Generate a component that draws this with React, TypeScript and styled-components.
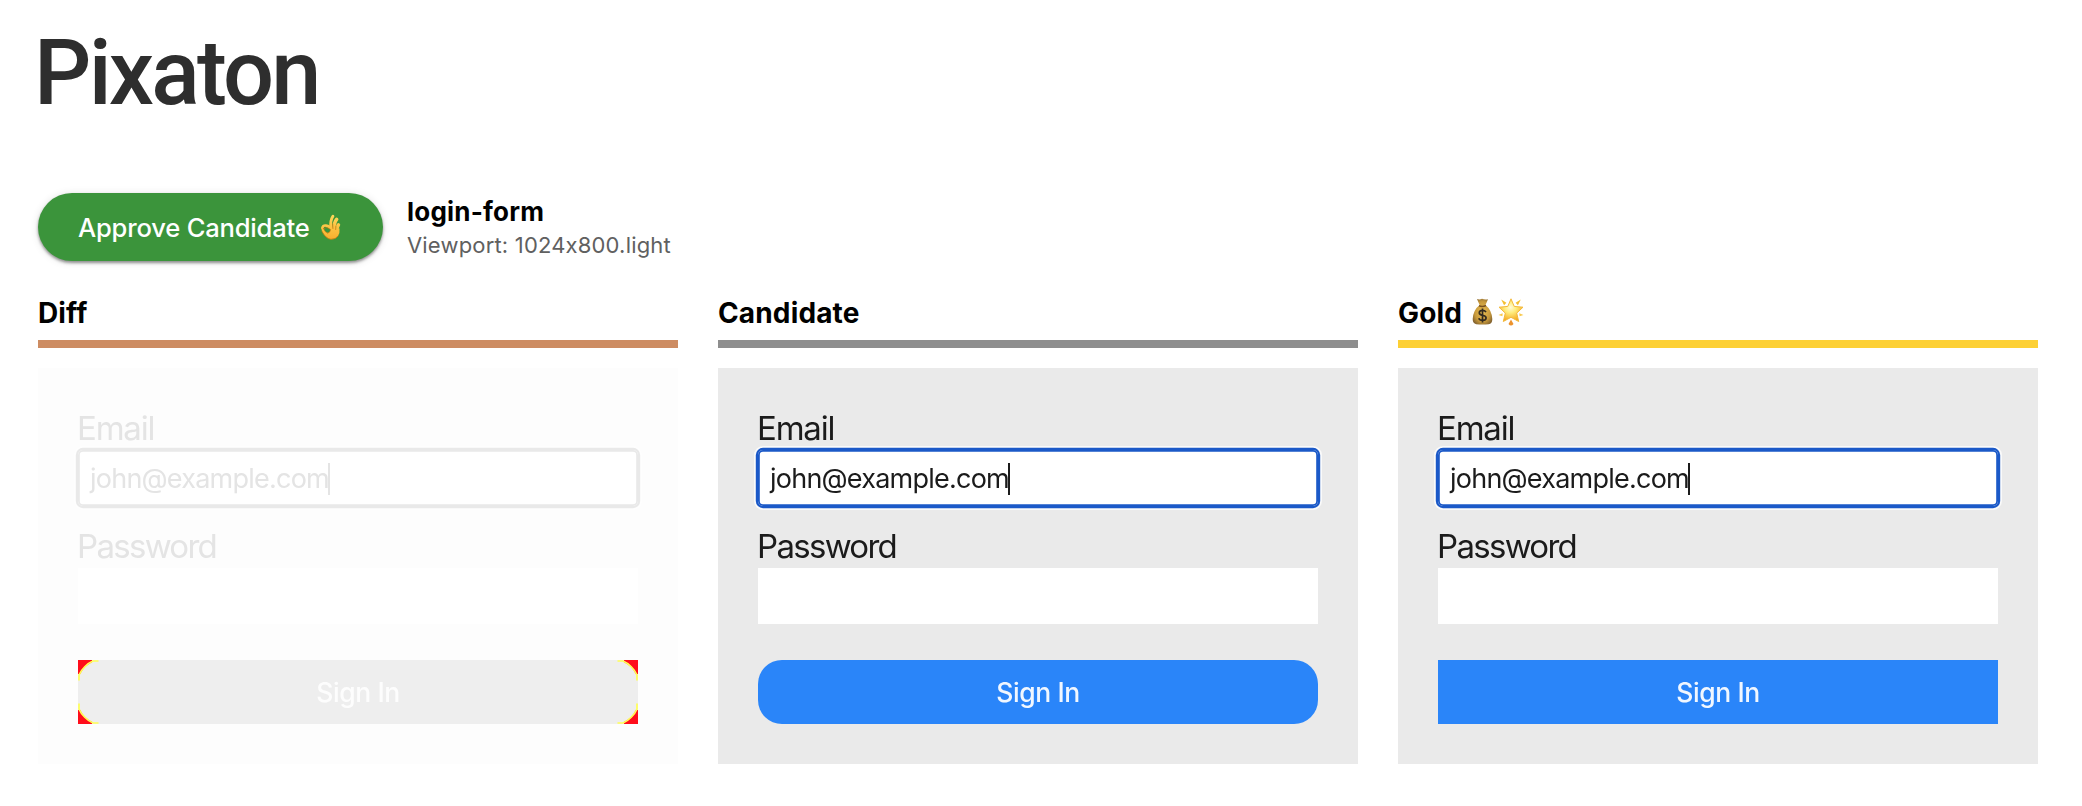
import React from "react";
import styled, { createGlobalStyle } from "styled-components";

const GlobalStyle = createGlobalStyle`
  * { box-sizing: border-box; }
  body {
    margin: 0;
    background: #fff;
    color: #000;
    font-family: Inter, "Liberation Sans", sans-serif;
    font-feature-settings: "calt" 0;
  }
`;

const Page = styled.main`
  padding: 0 44px 42px 38px;
`;

const Brand = styled.header`
  height: 193px;
  padding-top: 19px;
`;

const Wordmark = styled.h1`
  margin: 0 0 0 -4px;
  font: 500 90px/110px Roboto, sans-serif;
  letter-spacing: -2.8px;
  color: #2e2e2e;
`;

const Toolbar = styled.section`
  display: flex;
  gap: 24px;
  height: 68px;
`;

const ApproveButton = styled.button`
  display: flex;
  align-items: center;
  gap: 10px;
  width: 345px;
  height: 68px;
  padding: 1px 0 0 40px;
  border: 0;
  border-radius: 34px;
  background: #3b943b;
  box-shadow: 0 2px 3px rgba(0, 0, 0, 0.4), 0 1px 8px rgba(0, 0, 0, 0.12);
  color: #fff;
  font: 500 25.6px/68px Inter, sans-serif;
  letter-spacing: -0.2px;
  white-space: nowrap;
`;

const TestInfo = styled.div`
  padding-top: 3px;
`;

const TestName = styled.div`
  margin-bottom: 1px;
  font-size: 26px;
  font-weight: 700;
  line-height: 32px;
  letter-spacing: 0.2px;
`;

const Viewport = styled.div`
  font-size: 22px;
  line-height: 32px;
  letter-spacing: 0.18px;
  color: #606060;
`;

const Columns = styled.section`
  display: grid;
  grid-template-columns: repeat(3, 640px);
  gap: 40px;
  padding-top: 34px;
`;

const ColumnTitle = styled.h2<{ $line: string }>`
  display: flex;
  align-items: flex-start;
  height: 53px;
  margin: 0 0 20px;
  border-bottom: 8px solid ${(p) => p.$line};
  font-size: 28px;
  font-weight: 700;
  line-height: 36px;
  letter-spacing: 0.15px;
`;

const EmojiPair = styled.span`
  display: flex;
  gap: 5px;
  margin: 3px 0 0 10px;
`;

type Tone = {
  panel: string;
  text: string;
  outline: string;
  halo: string;
  button: string;
  buttonText: string;
};

const liveTone: Tone = {
  panel: "#eaeaea",
  text: "#1b1b1b",
  outline: "#1b59c8",
  halo: "#fafafa",
  button: "#2a85f9",
  buttonText: "#f1f7ff",
};

const fadedTone: Tone = {
  panel: "#fdfdfd",
  text: "#e4e4e4",
  outline: "#e9e9e9",
  halo: "#fefefe",
  button: "#eeeeee",
  buttonText: "#fdfdfd",
};

const Panel = styled.div<{ $tone: Tone }>`
  height: 396px;
  padding: 40px;
  background: ${(p) => p.$tone.panel};
  color: ${(p) => p.$tone.text};
`;

const Label = styled.div<{ $tracking: number }>`
  height: 42px;
  margin-left: -1px;
  font-size: 33px;
  line-height: 40px;
  letter-spacing: ${(p) => p.$tracking}px;
  filter: blur(0.5px);
`;

const Field = styled.div<{ $tone?: Tone }>`
  display: flex;
  align-items: center;
  height: 56px;
  padding: 2px 0 0 12px;
  background: #fff;
  font-size: 27px;
  line-height: 54px;
  letter-spacing: -0.77px;
  ${(p) =>
    p.$tone &&
    `
    border-radius: 5px;
    margin-bottom: 20px;
    box-shadow: inset 0 0 0 1.8px ${p.$tone.outline}, 0 0 0 2.2px ${p.$tone.outline}, 0 0 0 4px ${p.$tone.halo};
  `}
`;

const FieldText = styled.span`
  filter: blur(0.5px);
`;

const Caret = styled.i`
  width: 2px;
  height: 32px;
  margin-left: -1px;
  background: currentColor;
`;

const SignIn = styled.div<{ $tone: Tone; $radius: number }>`
  position: relative;
  height: 64px;
  margin-top: 36px;
  border-radius: ${(p) => p.$radius}px;
  background: ${(p) => p.$tone.button};
  color: ${(p) => p.$tone.buttonText};
  font-size: 26.5px;
  font-weight: 500;
  line-height: 64px;
  text-align: center;
  letter-spacing: -0.4px;
`;

const CornerMark = styled.svg<{ $right?: boolean; $bottom?: boolean }>`
  position: absolute;
  ${(p) => (p.$right ? "right: 0;" : "left: 0;")}
  ${(p) => (p.$bottom ? "bottom: 0;" : "top: 0;")}
  transform: scale(${(p) => (p.$right ? -1 : 1)}, ${(p) => (p.$bottom ? -1 : 1)});
`;

function Corner({ right, bottom }: { right?: boolean; bottom?: boolean }) {
  return (
    <CornerMark $right={right} $bottom={bottom} width="22" height="22" viewBox="0 0 22 22">
      <path d="M0 0H14V2.2A24 24 0 0 0 2.2 14H0Z" fill="#ff0d1b" />
      <path d="M20.5 1H15C9.5 3.2 3.2 9.5 1 15V20.5" fill="none" stroke="#ffff55" strokeWidth="1.7" />
    </CornerMark>
  );
}

function OkHand() {
  return (
    <svg width="21" height="27" viewBox="0 0 21 27">
      <defs>
        <linearGradient id="skin" gradientUnits="userSpaceOnUse" x1="0" y1="0" x2="0" y2="26">
          <stop offset="0" stopColor="#ffd95c" />
          <stop offset="1" stopColor="#f8ae2c" />
        </linearGradient>
      </defs>
      <g fill="none" stroke="url(#skin)" strokeLinecap="round" strokeLinejoin="round">
        <path d="M12.9 2.2Q10 6.5 10.9 14" strokeWidth="2.9" />
        <path d="M16.6 5.4Q13.9 8.5 14 16" strokeWidth="3.6" />
        <path d="M18.4 11Q16.8 13 16.4 18" strokeWidth="3.6" />
        <path d="M2.3 14Q3 11.2 6 11.6Q10 12.2 12 15.3M2.3 14Q4 20 9.5 20" strokeWidth="2.6" />
      </g>
      <path d="M11 13.4L19.5 14.5Q20.2 19 17.7 22.6Q14.8 26 10.2 25.2Q5.4 24.1 1.5 16.2L6.2 19.2Q10 19.8 11 13.4Z" fill="url(#skin)" />
      <path
        d="M3.7 14.5Q7 12.4 10.6 15.5Q10 18.8 7.5 19.2Q4.4 17.8 3.7 14.5ZM2 17.5Q5.6 24.8 11 25.3Q16 25.3 18.4 21.8M12.7 10L12.9 14.5M15.9 12L15.7 15.5"
        fill="none"
        stroke="#c27a12"
        strokeWidth=".8"
        strokeLinecap="round"
      />
      <path d="M4.3 14.9Q7 13.3 9.9 15.8Q9.3 18.3 7.5 18.6Q5 17.5 4.3 14.9Z" fill="#3b943b" />
    </svg>
  );
}

function MoneyBag() {
  return (
    <svg width="21" height="27" viewBox="0 0 21 27">
      <defs>
        <radialGradient id="bag" cx=".5" cy=".5" r=".6">
          <stop offset="0" stopColor="#e8bd53" />
          <stop offset=".65" stopColor="#c89a3c" />
          <stop offset="1" stopColor="#80602e" />
        </radialGradient>
      </defs>
      <path
        d="M5 1Q7.5 2 10 .8Q13 2 16 1.2L13.5 7Q19.7 12 20.3 21Q20.4 25.8 16.5 26.2Q10.5 27 4.2 26.2Q.6 25.5.7 21Q1.2 12 7.6 7Z"
        fill="url(#bag)"
      />
      <path d="M7 7.8Q10.5 9.2 14 7.5" fill="none" stroke="#765020" strokeWidth="1.6" />
      <path
        d="M14 14.1Q12.8 12.3 10.4 12.4Q7.2 12.6 7.3 14.9Q7.4 16.8 10.5 17.3Q14.1 17.7 14.1 20Q13.9 22.4 10.6 22.4Q7.6 22.4 6.8 20.2M10.5 10.4V24.4"
        fill="none"
        stroke="#332b20"
        strokeWidth="1.7"
      />
    </svg>
  );
}

function GlowingStar() {
  return (
    <svg width="26" height="28" viewBox="0 0 26 28">
      <defs>
        <radialGradient id="star" cx=".48" cy=".38" r=".6">
          <stop offset="0" stopColor="#fffbd8" />
          <stop offset=".4" stopColor="#ffec7c" />
          <stop offset="1" stopColor="#f5a81f" />
        </radialGradient>
      </defs>
      <path
        d="M13 .8L16.2 8.4L25 9.2L18.7 15.1L20.7 23.5L13 19.3L5.3 23.5L7.3 15.1L1 9.2L9.8 8.4Z"
        fill="url(#star)"
        stroke="#f3b93c"
        strokeWidth="1"
        strokeLinejoin="round"
      />
      <path d="M3.2 1.6L8.4 4.8L6.1 7.2ZM22.8 1.6L17.6 4.8L19.9 7.2Z" fill="#f4bf30" />
      <path d="M.5 17L4.7 15.3L4.4 18.2ZM25.5 17L21.3 15.3L21.6 18.2Z" fill="#f8c94c" />
      <path d="M13 21.6L15.5 26Q13 29 10.5 26Z" fill="#ec922c" />
    </svg>
  );
}

function LoginShot({ tone, radius, marked }: { tone: Tone; radius: number; marked?: boolean }) {
  return (
    <Panel $tone={tone}>
      <Label $tracking={-1.2}>Email</Label>
      <Field $tone={tone}>
        <FieldText>john@example.com</FieldText>
        <Caret />
      </Field>
      <Label $tracking={-1.7}>Password</Label>
      <Field />
      <SignIn $tone={tone} $radius={radius}>
        <FieldText>Sign In</FieldText>
        {marked && (
          <>
            <Corner />
            <Corner right />
            <Corner bottom />
            <Corner right bottom />
          </>
        )}
      </SignIn>
    </Panel>
  );
}

export default function App() {
  return (
    <>
      <GlobalStyle />
      <Page>
        <Brand>
          <Wordmark>Pixaton</Wordmark>
        </Brand>
        <Toolbar>
          <ApproveButton>
            Approve Candidate
            <OkHand />
          </ApproveButton>
          <TestInfo>
            <TestName>login-form</TestName>
            <Viewport>Viewport: 1024x800.light</Viewport>
          </TestInfo>
        </Toolbar>
        <Columns>
          <article>
            <ColumnTitle $line="#cd8c62">Diff</ColumnTitle>
            <LoginShot tone={fadedTone} radius={0} marked />
          </article>
          <article>
            <ColumnTitle $line="#8e8e8e">Candidate</ColumnTitle>
            <LoginShot tone={liveTone} radius={24} />
          </article>
          <article>
            <ColumnTitle $line="#fdd035">
              Gold
              <EmojiPair>
                <MoneyBag />
                <GlowingStar />
              </EmojiPair>
            </ColumnTitle>
            <LoginShot tone={liveTone} radius={0} />
          </article>
        </Columns>
      </Page>
    </>
  );
}
